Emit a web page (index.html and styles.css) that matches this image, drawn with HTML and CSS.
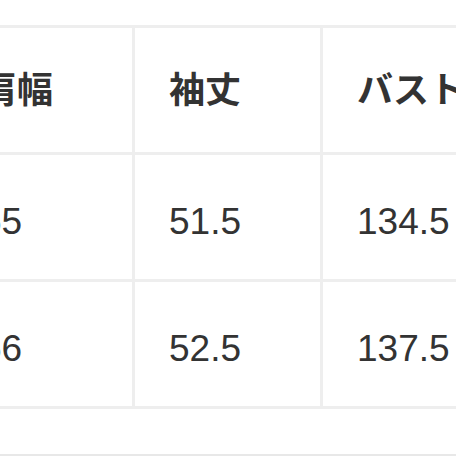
FILE: index.html
```html
<!DOCTYPE html>
<html lang="ja">
<head>
<meta charset="utf-8">
<link rel="stylesheet" href="styles.css">
</head>
<body>
<div class="page">
  <div class="table">
    <div class="cell head">肩幅</div>
    <div class="cell head">袖丈</div>
    <div class="cell head">バスト</div>
    <div class="cell num">55</div>
    <div class="cell num">51.5</div>
    <div class="cell num">134.5</div>
    <div class="cell num">56</div>
    <div class="cell num">52.5</div>
    <div class="cell num">137.5</div>
  </div>
  <div class="foot"></div>
</div>
</body>
</html>
```
FILE: styles.css
```css
html, body {
  margin: 0;
  padding: 0;
  background: #ffffff;
}
.page {
  width: 456px;
  height: 456px;
  overflow: hidden;
  position: relative;
  background: #ffffff;
}
.table {
  margin-top: 25px;
  margin-left: -53px;
  display: grid;
  grid-template-columns: 185px 185px 185px;
  grid-auto-rows: 124px;
  gap: 3px;
  padding: 3px 0 3px 0;
  background: #eeeeee;
  width: 561px;
}
.cell {
  background: #ffffff;
  display: flex;
  align-items: center;
  padding-left: 34px;
  color: #333333;
  white-space: nowrap;
}
.head {
  font-family: "Noto Sans CJK JP", "Noto Sans", sans-serif;
  font-weight: 700;
  font-size: 36px;
  padding-bottom: 6px;
}
.num {
  font-family: "Liberation Sans", Arial, sans-serif;
  font-size: 37px;
  padding-top: 10px;
}
.foot {
  position: absolute;
  left: 0;
  right: 0;
  top: 454px;
  height: 2px;
  background: #e8e8e8;
}
```
